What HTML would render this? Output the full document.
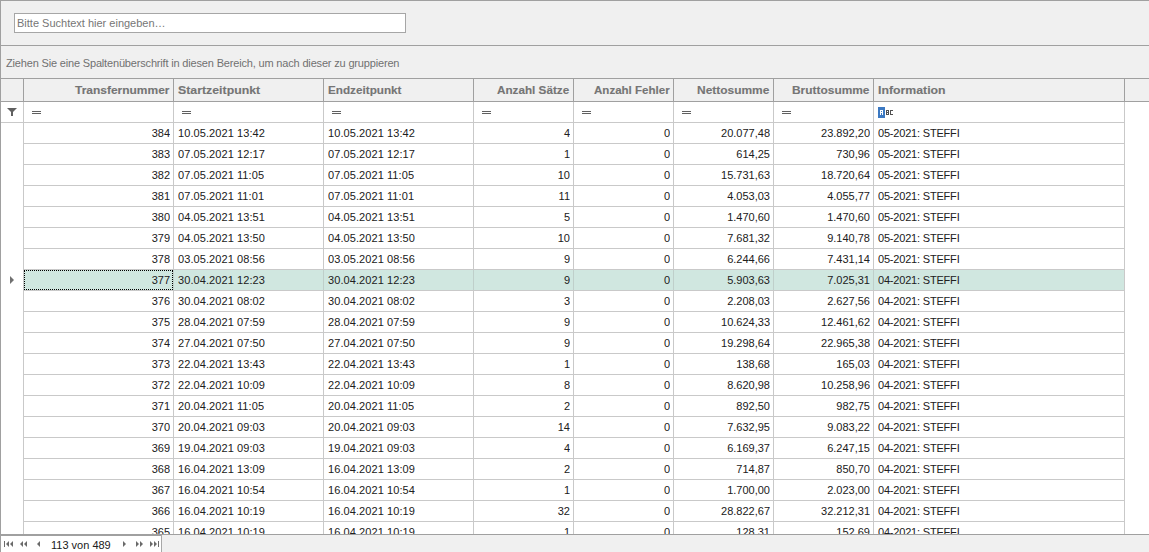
<!DOCTYPE html><html><head><meta charset="utf-8"><style>
*{margin:0;padding:0;box-sizing:border-box}
html,body{width:1149px;height:552px;overflow:hidden;background:#f0f0f0;font-family:"Liberation Sans",sans-serif;font-size:11px;color:#202020}
.a{position:absolute}
.t{position:absolute;white-space:nowrap;line-height:20px;height:20px}
.r{text-align:right}
.h{font-weight:bold;-webkit-text-stroke:0.12px #757575;color:#757575}
</style></head><body><div class="a" style="left:0;top:0;width:1149px;height:1px;background:#a0a0a0"></div>
<div class="a" style="left:0;top:0;width:1px;height:552px;background:#a0a0a0"></div>
<div class="a" style="left:14px;top:13px;width:392px;height:20px;background:#fff;border:1px solid #a6a6a6"></div>
<div class="t" style="left:17px;top:13px;color:#767676">Bitte Suchtext hier eingeben…</div>
<div class="a" style="left:0;top:45px;width:1149px;height:1px;background:#a0a0a0"></div>
<div class="t" style="left:6px;top:53px;color:#707070;letter-spacing:-0.17px">Ziehen Sie eine Spaltenüberschrift in diesen Bereich, um nach dieser zu gruppieren</div>
<div class="a" style="left:0;top:78px;width:1149px;height:1px;background:#a0a0a0"></div>
<div class="a" style="left:0;top:101px;width:1149px;height:1px;background:#a0a0a0"></div>
<div class="a" style="left:1px;top:102px;width:1148px;height:432px;background:#fff"></div>
<div class="a" style="left:23px;top:79px;width:1px;height:22px;background:#a0a0a0"></div>
<div class="a" style="left:173px;top:79px;width:1px;height:22px;background:#a0a0a0"></div>
<div class="a" style="left:323px;top:79px;width:1px;height:22px;background:#a0a0a0"></div>
<div class="a" style="left:473px;top:79px;width:1px;height:22px;background:#a0a0a0"></div>
<div class="a" style="left:573px;top:79px;width:1px;height:22px;background:#a0a0a0"></div>
<div class="a" style="left:673px;top:79px;width:1px;height:22px;background:#a0a0a0"></div>
<div class="a" style="left:773px;top:79px;width:1px;height:22px;background:#a0a0a0"></div>
<div class="a" style="left:873px;top:79px;width:1px;height:22px;background:#a0a0a0"></div>
<div class="a" style="left:1124px;top:79px;width:1px;height:22px;background:#a0a0a0"></div>
<div class="a" style="left:23px;top:102px;width:1px;height:432px;background:#c9c9c9"></div>
<div class="a" style="left:173px;top:102px;width:1px;height:432px;background:#c9c9c9"></div>
<div class="a" style="left:323px;top:102px;width:1px;height:432px;background:#c9c9c9"></div>
<div class="a" style="left:473px;top:102px;width:1px;height:432px;background:#c9c9c9"></div>
<div class="a" style="left:573px;top:102px;width:1px;height:432px;background:#c9c9c9"></div>
<div class="a" style="left:673px;top:102px;width:1px;height:432px;background:#c9c9c9"></div>
<div class="a" style="left:773px;top:102px;width:1px;height:432px;background:#c9c9c9"></div>
<div class="a" style="left:873px;top:102px;width:1px;height:432px;background:#c9c9c9"></div>
<div class="a" style="left:1124px;top:102px;width:1px;height:432px;background:#c9c9c9"></div>
<div class="a" style="left:1px;top:122px;width:1123px;height:1px;background:#c9c9c9"></div>
<div class="a" style="left:24px;top:143px;width:1100px;height:1px;background:#c9c9c9"></div>
<div class="a" style="left:24px;top:164px;width:1100px;height:1px;background:#c9c9c9"></div>
<div class="a" style="left:24px;top:185px;width:1100px;height:1px;background:#c9c9c9"></div>
<div class="a" style="left:24px;top:206px;width:1100px;height:1px;background:#c9c9c9"></div>
<div class="a" style="left:24px;top:227px;width:1100px;height:1px;background:#c9c9c9"></div>
<div class="a" style="left:24px;top:248px;width:1100px;height:1px;background:#c9c9c9"></div>
<div class="a" style="left:24px;top:269px;width:1100px;height:1px;background:#c9c9c9"></div>
<div class="a" style="left:24px;top:290px;width:1100px;height:1px;background:#c9c9c9"></div>
<div class="a" style="left:24px;top:311px;width:1100px;height:1px;background:#c9c9c9"></div>
<div class="a" style="left:24px;top:332px;width:1100px;height:1px;background:#c9c9c9"></div>
<div class="a" style="left:24px;top:353px;width:1100px;height:1px;background:#c9c9c9"></div>
<div class="a" style="left:24px;top:374px;width:1100px;height:1px;background:#c9c9c9"></div>
<div class="a" style="left:24px;top:395px;width:1100px;height:1px;background:#c9c9c9"></div>
<div class="a" style="left:24px;top:416px;width:1100px;height:1px;background:#c9c9c9"></div>
<div class="a" style="left:24px;top:437px;width:1100px;height:1px;background:#c9c9c9"></div>
<div class="a" style="left:24px;top:458px;width:1100px;height:1px;background:#c9c9c9"></div>
<div class="a" style="left:24px;top:479px;width:1100px;height:1px;background:#c9c9c9"></div>
<div class="a" style="left:24px;top:500px;width:1100px;height:1px;background:#c9c9c9"></div>
<div class="a" style="left:24px;top:521px;width:1100px;height:1px;background:#c9c9c9"></div>
<div class="t h" style="left:74.50px;top:80px;transform:scaleX(1.0884);transform-origin:0 0">Transfernummer</div>
<div class="t h" style="left:178.00px;top:80px;transform:scaleX(1.1207);transform-origin:0 0">Startzeitpunkt</div>
<div class="t h" style="left:327.80px;top:80px;transform:scaleX(1.0643);transform-origin:0 0">Endzeitpunkt</div>
<div class="t h" style="left:496.90px;top:80px;transform:scaleX(1.0637);transform-origin:0 0">Anzahl Sätze</div>
<div class="t h" style="left:593.50px;top:80px;transform:scaleX(1.0491);transform-origin:0 0">Anzahl Fehler</div>
<div class="t h" style="left:696.50px;top:80px;transform:scaleX(1.0867);transform-origin:0 0">Nettosumme</div>
<div class="t h" style="left:791.70px;top:80px;transform:scaleX(1.0839);transform-origin:0 0">Bruttosumme</div>
<div class="t h" style="left:877.50px;top:80px;transform:scaleX(1.1174);transform-origin:0 0">Information</div>
<div class="a" style="left:32px;top:111px;width:9px;height:1px;background:#606060"></div>
<div class="a" style="left:32px;top:113px;width:9px;height:1px;background:#606060"></div>
<div class="a" style="left:182px;top:111px;width:9px;height:1px;background:#606060"></div>
<div class="a" style="left:182px;top:113px;width:9px;height:1px;background:#606060"></div>
<div class="a" style="left:332px;top:111px;width:9px;height:1px;background:#606060"></div>
<div class="a" style="left:332px;top:113px;width:9px;height:1px;background:#606060"></div>
<div class="a" style="left:482px;top:111px;width:9px;height:1px;background:#606060"></div>
<div class="a" style="left:482px;top:113px;width:9px;height:1px;background:#606060"></div>
<div class="a" style="left:582px;top:111px;width:9px;height:1px;background:#606060"></div>
<div class="a" style="left:582px;top:113px;width:9px;height:1px;background:#606060"></div>
<div class="a" style="left:682px;top:111px;width:9px;height:1px;background:#606060"></div>
<div class="a" style="left:682px;top:113px;width:9px;height:1px;background:#606060"></div>
<div class="a" style="left:782px;top:111px;width:9px;height:1px;background:#606060"></div>
<div class="a" style="left:782px;top:113px;width:9px;height:1px;background:#606060"></div>
<svg class="a" style="left:878px;top:107px" width="16" height="11" viewBox="0 0 16 11" shape-rendering="crispEdges"><rect x="0" y="0" width="7" height="11" fill="#3c79c2"/><path fill="#fff" d="M2 3h3v1h-3zM2 4h1v4h-1zM4 4h1v4h-1zM3 5h1v1h-1z"/><path fill="#505050" d="M8 3h3v1h-3zM8 4h1v4h-1zM10 4h1v4h-1zM9 5h1v1h-1zM9 7h1v1h-1zM12 3h3v1h-3zM12 4h1v4h-1zM13 7h2v1h-2z"/></svg>
<svg class="a" style="left:7px;top:108px" width="10" height="8" viewBox="0 0 10 8"><path d="M0 0H10L6 4V8H4V4Z" fill="#606060"/></svg>
<div class="t r" style="left:24px;top:123px;width:146px;height:20px;overflow:hidden">384</div>
<div class="t" style="left:178px;top:123px;height:20px;overflow:hidden;letter-spacing:0.08px">10.05.2021 13:42</div>
<div class="t" style="left:328px;top:123px;height:20px;overflow:hidden;letter-spacing:0.08px">10.05.2021 13:42</div>
<div class="t r" style="left:474px;top:123px;width:96px;height:20px;overflow:hidden">4</div>
<div class="t r" style="left:574px;top:123px;width:96px;height:20px;overflow:hidden">0</div>
<div class="t r" style="left:674px;top:123px;width:96px;height:20px;overflow:hidden">20.077,48</div>
<div class="t r" style="left:774px;top:123px;width:96px;height:20px;overflow:hidden">23.892,20</div>
<div class="t" style="left:878px;top:123px;height:20px;overflow:hidden;letter-spacing:-0.19px">05-2021: STEFFI</div>
<div class="t r" style="left:24px;top:144px;width:146px;height:20px;overflow:hidden">383</div>
<div class="t" style="left:178px;top:144px;height:20px;overflow:hidden;letter-spacing:0.08px">07.05.2021 12:17</div>
<div class="t" style="left:328px;top:144px;height:20px;overflow:hidden;letter-spacing:0.08px">07.05.2021 12:17</div>
<div class="t r" style="left:474px;top:144px;width:96px;height:20px;overflow:hidden">1</div>
<div class="t r" style="left:574px;top:144px;width:96px;height:20px;overflow:hidden">0</div>
<div class="t r" style="left:674px;top:144px;width:96px;height:20px;overflow:hidden">614,25</div>
<div class="t r" style="left:774px;top:144px;width:96px;height:20px;overflow:hidden">730,96</div>
<div class="t" style="left:878px;top:144px;height:20px;overflow:hidden;letter-spacing:-0.19px">05-2021: STEFFI</div>
<div class="t r" style="left:24px;top:165px;width:146px;height:20px;overflow:hidden">382</div>
<div class="t" style="left:178px;top:165px;height:20px;overflow:hidden;letter-spacing:0.08px">07.05.2021 11:05</div>
<div class="t" style="left:328px;top:165px;height:20px;overflow:hidden;letter-spacing:0.08px">07.05.2021 11:05</div>
<div class="t r" style="left:474px;top:165px;width:96px;height:20px;overflow:hidden">10</div>
<div class="t r" style="left:574px;top:165px;width:96px;height:20px;overflow:hidden">0</div>
<div class="t r" style="left:674px;top:165px;width:96px;height:20px;overflow:hidden">15.731,63</div>
<div class="t r" style="left:774px;top:165px;width:96px;height:20px;overflow:hidden">18.720,64</div>
<div class="t" style="left:878px;top:165px;height:20px;overflow:hidden;letter-spacing:-0.19px">05-2021: STEFFI</div>
<div class="t r" style="left:24px;top:186px;width:146px;height:20px;overflow:hidden">381</div>
<div class="t" style="left:178px;top:186px;height:20px;overflow:hidden;letter-spacing:0.08px">07.05.2021 11:01</div>
<div class="t" style="left:328px;top:186px;height:20px;overflow:hidden;letter-spacing:0.08px">07.05.2021 11:01</div>
<div class="t r" style="left:474px;top:186px;width:96px;height:20px;overflow:hidden">11</div>
<div class="t r" style="left:574px;top:186px;width:96px;height:20px;overflow:hidden">0</div>
<div class="t r" style="left:674px;top:186px;width:96px;height:20px;overflow:hidden">4.053,03</div>
<div class="t r" style="left:774px;top:186px;width:96px;height:20px;overflow:hidden">4.055,77</div>
<div class="t" style="left:878px;top:186px;height:20px;overflow:hidden;letter-spacing:-0.19px">05-2021: STEFFI</div>
<div class="t r" style="left:24px;top:207px;width:146px;height:20px;overflow:hidden">380</div>
<div class="t" style="left:178px;top:207px;height:20px;overflow:hidden;letter-spacing:0.08px">04.05.2021 13:51</div>
<div class="t" style="left:328px;top:207px;height:20px;overflow:hidden;letter-spacing:0.08px">04.05.2021 13:51</div>
<div class="t r" style="left:474px;top:207px;width:96px;height:20px;overflow:hidden">5</div>
<div class="t r" style="left:574px;top:207px;width:96px;height:20px;overflow:hidden">0</div>
<div class="t r" style="left:674px;top:207px;width:96px;height:20px;overflow:hidden">1.470,60</div>
<div class="t r" style="left:774px;top:207px;width:96px;height:20px;overflow:hidden">1.470,60</div>
<div class="t" style="left:878px;top:207px;height:20px;overflow:hidden;letter-spacing:-0.19px">05-2021: STEFFI</div>
<div class="t r" style="left:24px;top:228px;width:146px;height:20px;overflow:hidden">379</div>
<div class="t" style="left:178px;top:228px;height:20px;overflow:hidden;letter-spacing:0.08px">04.05.2021 13:50</div>
<div class="t" style="left:328px;top:228px;height:20px;overflow:hidden;letter-spacing:0.08px">04.05.2021 13:50</div>
<div class="t r" style="left:474px;top:228px;width:96px;height:20px;overflow:hidden">10</div>
<div class="t r" style="left:574px;top:228px;width:96px;height:20px;overflow:hidden">0</div>
<div class="t r" style="left:674px;top:228px;width:96px;height:20px;overflow:hidden">7.681,32</div>
<div class="t r" style="left:774px;top:228px;width:96px;height:20px;overflow:hidden">9.140,78</div>
<div class="t" style="left:878px;top:228px;height:20px;overflow:hidden;letter-spacing:-0.19px">05-2021: STEFFI</div>
<div class="t r" style="left:24px;top:249px;width:146px;height:20px;overflow:hidden">378</div>
<div class="t" style="left:178px;top:249px;height:20px;overflow:hidden;letter-spacing:0.08px">03.05.2021 08:56</div>
<div class="t" style="left:328px;top:249px;height:20px;overflow:hidden;letter-spacing:0.08px">03.05.2021 08:56</div>
<div class="t r" style="left:474px;top:249px;width:96px;height:20px;overflow:hidden">9</div>
<div class="t r" style="left:574px;top:249px;width:96px;height:20px;overflow:hidden">0</div>
<div class="t r" style="left:674px;top:249px;width:96px;height:20px;overflow:hidden">6.244,66</div>
<div class="t r" style="left:774px;top:249px;width:96px;height:20px;overflow:hidden">7.431,14</div>
<div class="t" style="left:878px;top:249px;height:20px;overflow:hidden;letter-spacing:-0.19px">05-2021: STEFFI</div>
<div class="a" style="left:24px;top:270px;width:1100px;height:20px;background:#d0e7e0"></div>
<div class="a" style="left:173px;top:270px;width:1px;height:20px;background:#bfcfca"></div>
<div class="a" style="left:323px;top:270px;width:1px;height:20px;background:#bfcfca"></div>
<div class="a" style="left:473px;top:270px;width:1px;height:20px;background:#bfcfca"></div>
<div class="a" style="left:573px;top:270px;width:1px;height:20px;background:#bfcfca"></div>
<div class="a" style="left:673px;top:270px;width:1px;height:20px;background:#bfcfca"></div>
<div class="a" style="left:773px;top:270px;width:1px;height:20px;background:#bfcfca"></div>
<div class="a" style="left:873px;top:270px;width:1px;height:20px;background:#bfcfca"></div>
<div class="a" style="left:1124px;top:270px;width:1px;height:20px;background:#c9c9c9"></div>
<div class="a" style="left:24px;top:270px;width:149px;height:20px;border:1px dotted #000"></div>
<svg class="a" style="left:10px;top:276px" width="5" height="8" viewBox="0 0 5 8"><path d="M0 0L4 4L0 8Z" fill="#707070"/></svg>
<div class="t r" style="left:24px;top:270px;width:146px;height:20px;overflow:hidden">377</div>
<div class="t" style="left:178px;top:270px;height:20px;overflow:hidden;letter-spacing:0.08px">30.04.2021 12:23</div>
<div class="t" style="left:328px;top:270px;height:20px;overflow:hidden;letter-spacing:0.08px">30.04.2021 12:23</div>
<div class="t r" style="left:474px;top:270px;width:96px;height:20px;overflow:hidden">9</div>
<div class="t r" style="left:574px;top:270px;width:96px;height:20px;overflow:hidden">0</div>
<div class="t r" style="left:674px;top:270px;width:96px;height:20px;overflow:hidden">5.903,63</div>
<div class="t r" style="left:774px;top:270px;width:96px;height:20px;overflow:hidden">7.025,31</div>
<div class="t" style="left:878px;top:270px;height:20px;overflow:hidden;letter-spacing:-0.19px">04-2021: STEFFI</div>
<div class="t r" style="left:24px;top:291px;width:146px;height:20px;overflow:hidden">376</div>
<div class="t" style="left:178px;top:291px;height:20px;overflow:hidden;letter-spacing:0.08px">30.04.2021 08:02</div>
<div class="t" style="left:328px;top:291px;height:20px;overflow:hidden;letter-spacing:0.08px">30.04.2021 08:02</div>
<div class="t r" style="left:474px;top:291px;width:96px;height:20px;overflow:hidden">3</div>
<div class="t r" style="left:574px;top:291px;width:96px;height:20px;overflow:hidden">0</div>
<div class="t r" style="left:674px;top:291px;width:96px;height:20px;overflow:hidden">2.208,03</div>
<div class="t r" style="left:774px;top:291px;width:96px;height:20px;overflow:hidden">2.627,56</div>
<div class="t" style="left:878px;top:291px;height:20px;overflow:hidden;letter-spacing:-0.19px">04-2021: STEFFI</div>
<div class="t r" style="left:24px;top:312px;width:146px;height:20px;overflow:hidden">375</div>
<div class="t" style="left:178px;top:312px;height:20px;overflow:hidden;letter-spacing:0.08px">28.04.2021 07:59</div>
<div class="t" style="left:328px;top:312px;height:20px;overflow:hidden;letter-spacing:0.08px">28.04.2021 07:59</div>
<div class="t r" style="left:474px;top:312px;width:96px;height:20px;overflow:hidden">9</div>
<div class="t r" style="left:574px;top:312px;width:96px;height:20px;overflow:hidden">0</div>
<div class="t r" style="left:674px;top:312px;width:96px;height:20px;overflow:hidden">10.624,33</div>
<div class="t r" style="left:774px;top:312px;width:96px;height:20px;overflow:hidden">12.461,62</div>
<div class="t" style="left:878px;top:312px;height:20px;overflow:hidden;letter-spacing:-0.19px">04-2021: STEFFI</div>
<div class="t r" style="left:24px;top:333px;width:146px;height:20px;overflow:hidden">374</div>
<div class="t" style="left:178px;top:333px;height:20px;overflow:hidden;letter-spacing:0.08px">27.04.2021 07:50</div>
<div class="t" style="left:328px;top:333px;height:20px;overflow:hidden;letter-spacing:0.08px">27.04.2021 07:50</div>
<div class="t r" style="left:474px;top:333px;width:96px;height:20px;overflow:hidden">9</div>
<div class="t r" style="left:574px;top:333px;width:96px;height:20px;overflow:hidden">0</div>
<div class="t r" style="left:674px;top:333px;width:96px;height:20px;overflow:hidden">19.298,64</div>
<div class="t r" style="left:774px;top:333px;width:96px;height:20px;overflow:hidden">22.965,38</div>
<div class="t" style="left:878px;top:333px;height:20px;overflow:hidden;letter-spacing:-0.19px">04-2021: STEFFI</div>
<div class="t r" style="left:24px;top:354px;width:146px;height:20px;overflow:hidden">373</div>
<div class="t" style="left:178px;top:354px;height:20px;overflow:hidden;letter-spacing:0.08px">22.04.2021 13:43</div>
<div class="t" style="left:328px;top:354px;height:20px;overflow:hidden;letter-spacing:0.08px">22.04.2021 13:43</div>
<div class="t r" style="left:474px;top:354px;width:96px;height:20px;overflow:hidden">1</div>
<div class="t r" style="left:574px;top:354px;width:96px;height:20px;overflow:hidden">0</div>
<div class="t r" style="left:674px;top:354px;width:96px;height:20px;overflow:hidden">138,68</div>
<div class="t r" style="left:774px;top:354px;width:96px;height:20px;overflow:hidden">165,03</div>
<div class="t" style="left:878px;top:354px;height:20px;overflow:hidden;letter-spacing:-0.19px">04-2021: STEFFI</div>
<div class="t r" style="left:24px;top:375px;width:146px;height:20px;overflow:hidden">372</div>
<div class="t" style="left:178px;top:375px;height:20px;overflow:hidden;letter-spacing:0.08px">22.04.2021 10:09</div>
<div class="t" style="left:328px;top:375px;height:20px;overflow:hidden;letter-spacing:0.08px">22.04.2021 10:09</div>
<div class="t r" style="left:474px;top:375px;width:96px;height:20px;overflow:hidden">8</div>
<div class="t r" style="left:574px;top:375px;width:96px;height:20px;overflow:hidden">0</div>
<div class="t r" style="left:674px;top:375px;width:96px;height:20px;overflow:hidden">8.620,98</div>
<div class="t r" style="left:774px;top:375px;width:96px;height:20px;overflow:hidden">10.258,96</div>
<div class="t" style="left:878px;top:375px;height:20px;overflow:hidden;letter-spacing:-0.19px">04-2021: STEFFI</div>
<div class="t r" style="left:24px;top:396px;width:146px;height:20px;overflow:hidden">371</div>
<div class="t" style="left:178px;top:396px;height:20px;overflow:hidden;letter-spacing:0.08px">20.04.2021 11:05</div>
<div class="t" style="left:328px;top:396px;height:20px;overflow:hidden;letter-spacing:0.08px">20.04.2021 11:05</div>
<div class="t r" style="left:474px;top:396px;width:96px;height:20px;overflow:hidden">2</div>
<div class="t r" style="left:574px;top:396px;width:96px;height:20px;overflow:hidden">0</div>
<div class="t r" style="left:674px;top:396px;width:96px;height:20px;overflow:hidden">892,50</div>
<div class="t r" style="left:774px;top:396px;width:96px;height:20px;overflow:hidden">982,75</div>
<div class="t" style="left:878px;top:396px;height:20px;overflow:hidden;letter-spacing:-0.19px">04-2021: STEFFI</div>
<div class="t r" style="left:24px;top:417px;width:146px;height:20px;overflow:hidden">370</div>
<div class="t" style="left:178px;top:417px;height:20px;overflow:hidden;letter-spacing:0.08px">20.04.2021 09:03</div>
<div class="t" style="left:328px;top:417px;height:20px;overflow:hidden;letter-spacing:0.08px">20.04.2021 09:03</div>
<div class="t r" style="left:474px;top:417px;width:96px;height:20px;overflow:hidden">14</div>
<div class="t r" style="left:574px;top:417px;width:96px;height:20px;overflow:hidden">0</div>
<div class="t r" style="left:674px;top:417px;width:96px;height:20px;overflow:hidden">7.632,95</div>
<div class="t r" style="left:774px;top:417px;width:96px;height:20px;overflow:hidden">9.083,22</div>
<div class="t" style="left:878px;top:417px;height:20px;overflow:hidden;letter-spacing:-0.19px">04-2021: STEFFI</div>
<div class="t r" style="left:24px;top:438px;width:146px;height:20px;overflow:hidden">369</div>
<div class="t" style="left:178px;top:438px;height:20px;overflow:hidden;letter-spacing:0.08px">19.04.2021 09:03</div>
<div class="t" style="left:328px;top:438px;height:20px;overflow:hidden;letter-spacing:0.08px">19.04.2021 09:03</div>
<div class="t r" style="left:474px;top:438px;width:96px;height:20px;overflow:hidden">4</div>
<div class="t r" style="left:574px;top:438px;width:96px;height:20px;overflow:hidden">0</div>
<div class="t r" style="left:674px;top:438px;width:96px;height:20px;overflow:hidden">6.169,37</div>
<div class="t r" style="left:774px;top:438px;width:96px;height:20px;overflow:hidden">6.247,15</div>
<div class="t" style="left:878px;top:438px;height:20px;overflow:hidden;letter-spacing:-0.19px">04-2021: STEFFI</div>
<div class="t r" style="left:24px;top:459px;width:146px;height:20px;overflow:hidden">368</div>
<div class="t" style="left:178px;top:459px;height:20px;overflow:hidden;letter-spacing:0.08px">16.04.2021 13:09</div>
<div class="t" style="left:328px;top:459px;height:20px;overflow:hidden;letter-spacing:0.08px">16.04.2021 13:09</div>
<div class="t r" style="left:474px;top:459px;width:96px;height:20px;overflow:hidden">2</div>
<div class="t r" style="left:574px;top:459px;width:96px;height:20px;overflow:hidden">0</div>
<div class="t r" style="left:674px;top:459px;width:96px;height:20px;overflow:hidden">714,87</div>
<div class="t r" style="left:774px;top:459px;width:96px;height:20px;overflow:hidden">850,70</div>
<div class="t" style="left:878px;top:459px;height:20px;overflow:hidden;letter-spacing:-0.19px">04-2021: STEFFI</div>
<div class="t r" style="left:24px;top:480px;width:146px;height:20px;overflow:hidden">367</div>
<div class="t" style="left:178px;top:480px;height:20px;overflow:hidden;letter-spacing:0.08px">16.04.2021 10:54</div>
<div class="t" style="left:328px;top:480px;height:20px;overflow:hidden;letter-spacing:0.08px">16.04.2021 10:54</div>
<div class="t r" style="left:474px;top:480px;width:96px;height:20px;overflow:hidden">1</div>
<div class="t r" style="left:574px;top:480px;width:96px;height:20px;overflow:hidden">0</div>
<div class="t r" style="left:674px;top:480px;width:96px;height:20px;overflow:hidden">1.700,00</div>
<div class="t r" style="left:774px;top:480px;width:96px;height:20px;overflow:hidden">2.023,00</div>
<div class="t" style="left:878px;top:480px;height:20px;overflow:hidden;letter-spacing:-0.19px">04-2021: STEFFI</div>
<div class="t r" style="left:24px;top:501px;width:146px;height:20px;overflow:hidden">366</div>
<div class="t" style="left:178px;top:501px;height:20px;overflow:hidden;letter-spacing:0.08px">16.04.2021 10:19</div>
<div class="t" style="left:328px;top:501px;height:20px;overflow:hidden;letter-spacing:0.08px">16.04.2021 10:19</div>
<div class="t r" style="left:474px;top:501px;width:96px;height:20px;overflow:hidden">32</div>
<div class="t r" style="left:574px;top:501px;width:96px;height:20px;overflow:hidden">0</div>
<div class="t r" style="left:674px;top:501px;width:96px;height:20px;overflow:hidden">28.822,67</div>
<div class="t r" style="left:774px;top:501px;width:96px;height:20px;overflow:hidden">32.212,31</div>
<div class="t" style="left:878px;top:501px;height:20px;overflow:hidden;letter-spacing:-0.19px">04-2021: STEFFI</div>
<div class="t r" style="left:24px;top:522px;width:146px;height:12px;overflow:hidden">365</div>
<div class="t" style="left:178px;top:522px;height:12px;overflow:hidden;letter-spacing:0.08px">16.04.2021 10:19</div>
<div class="t" style="left:328px;top:522px;height:12px;overflow:hidden;letter-spacing:0.08px">16.04.2021 10:19</div>
<div class="t r" style="left:474px;top:522px;width:96px;height:12px;overflow:hidden">1</div>
<div class="t r" style="left:574px;top:522px;width:96px;height:12px;overflow:hidden">0</div>
<div class="t r" style="left:674px;top:522px;width:96px;height:12px;overflow:hidden">128,31</div>
<div class="t r" style="left:774px;top:522px;width:96px;height:12px;overflow:hidden">152,69</div>
<div class="t" style="left:878px;top:522px;height:12px;overflow:hidden;letter-spacing:-0.19px">04-2021: STEFFI</div>
<div class="a" style="left:0;top:534px;width:1149px;height:1px;background:#a0a0a0"></div>
<div class="a" style="left:0;top:535px;width:162px;height:1px;background:#a0a0a0"></div>
<div class="a" style="left:1px;top:536px;width:160px;height:16px;background:#fff"></div>
<div class="a" style="left:161px;top:535px;width:1px;height:17px;background:#a8a8a8"></div>
<svg class="a" style="left:0;top:536px" width="162" height="16" viewBox="0 0 162 16" fill="#6a6a6a"><rect x="4" y="5" width="1" height="6"/><path d="M9 5V11L6 8Z"/><path d="M13 5V11L10 8Z"/><path d="M23 5V11L20 8Z"/><path d="M27 5V11L24 8Z"/><path d="M40 5V11L37 8Z"/><path d="M123 5V11L126 8Z"/><path d="M136 5V11L139 8Z"/><path d="M140 5V11L143 8Z"/><path d="M150 5V11L153 8Z"/><path d="M154 5V11L157 8Z"/><rect x="158" y="5" width="1" height="6"/></svg>
<div class="t" style="left:51px;top:535px;color:#202020">113 von 489</div></body></html>
